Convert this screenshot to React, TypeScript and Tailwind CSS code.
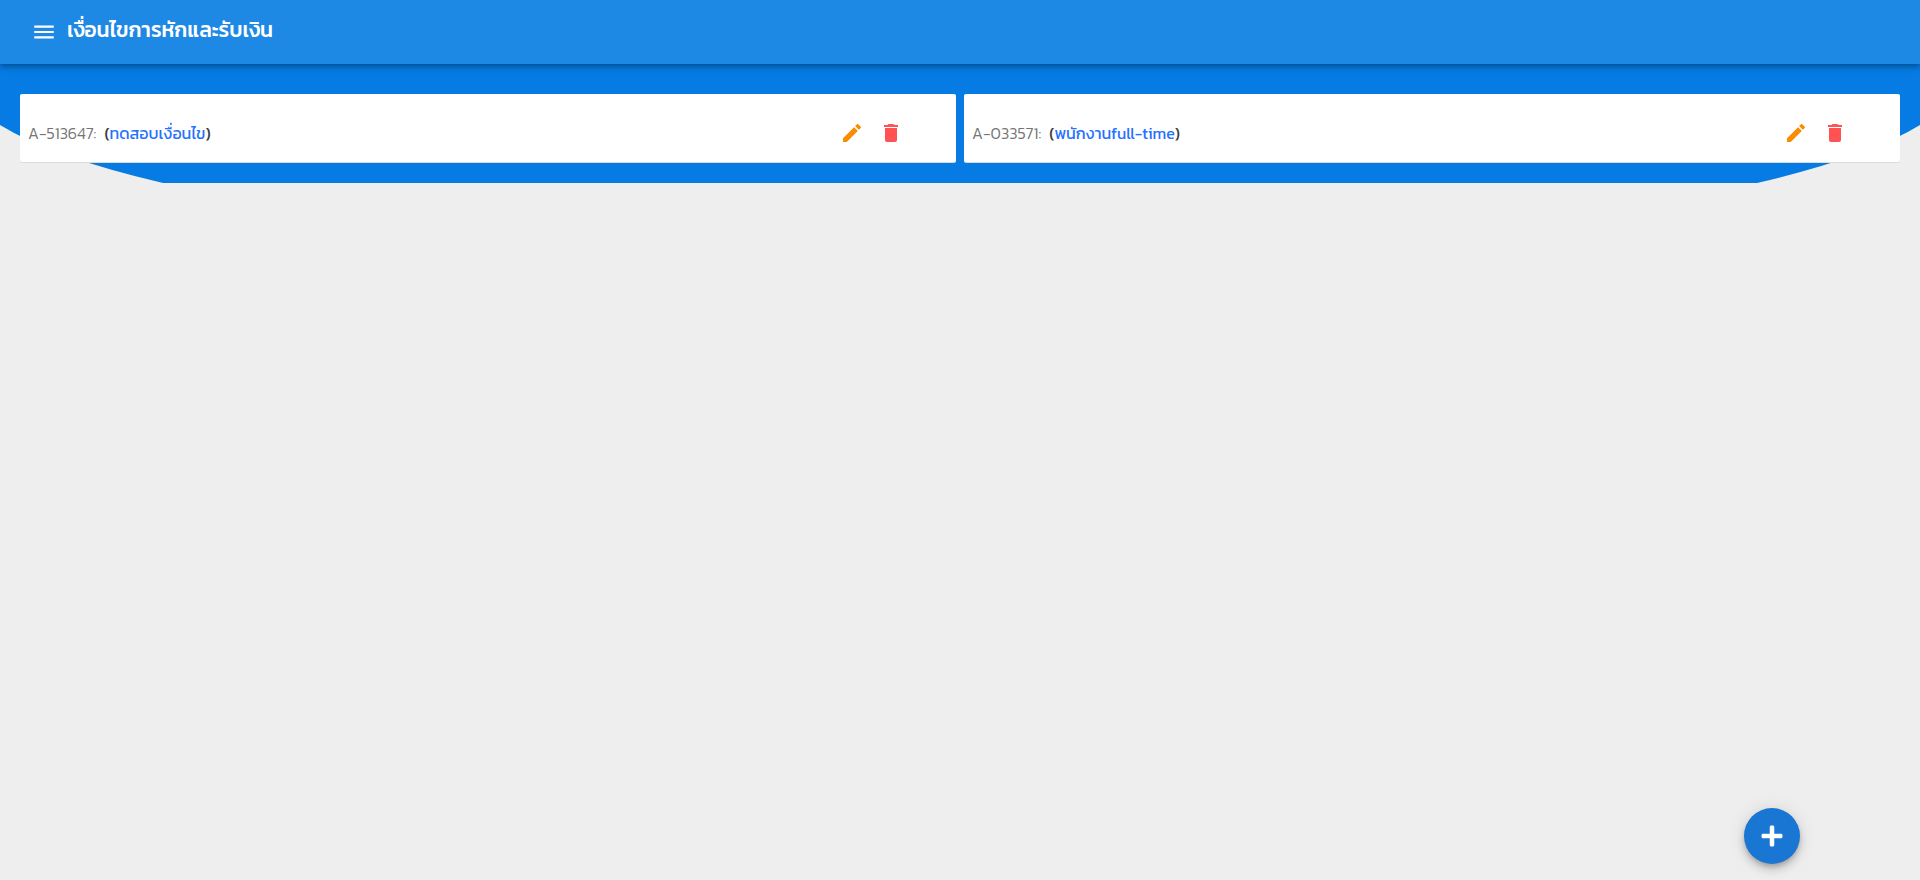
import { FaPlus } from "react-icons/fa";
import { MdDelete, MdEdit, MdMenu } from "react-icons/md";

interface Condition {
  code: string;
  name: string;
}

const conditions: Condition[] = [
  { code: "A-513647", name: "ทดสอบเงื่อนไข" },
  { code: "A-033571", name: "พนักงานfull-time" },
];

function Backdrop() {
  return (
    <svg
      className="absolute inset-x-0 top-0 h-[183px] w-full"
      viewBox="0 0 1920 183"
      preserveAspectRatio="none"
      aria-hidden="true"
    >
      <path
        d="M0 0H1920V125Q1868 157 1757 183H163Q52 157 0 125Z"
        fill="#067be3"
      />
    </svg>
  );
}

function ConditionCard({ code, name }: Condition) {
  return (
    <article className="flex h-[68px] items-center rounded-xs bg-white pr-[53px] pl-2 shadow-[0_1px_0_#dcdcdc]">
      <p className="mt-2.5 flex-1 text-base leading-6 whitespace-nowrap text-[#3c3c3c]">
        <span className="mr-2 font-light text-[#757575]">{code}:</span>
        (
        <a href="#" className="text-[#2470ff]">
          {name}
        </a>
        )
      </p>
      <div className="mt-2.5 flex gap-[15px]">
        <button type="button" aria-label="แก้ไข" className="text-[#fb8c00]">
          <MdEdit size={24} />
        </button>
        <button type="button" aria-label="ลบ" className="text-[#ff5252]">
          <MdDelete size={24} />
        </button>
      </div>
    </article>
  );
}

export default function App() {
  return (
    <div className="relative min-h-screen bg-[#eeeeee] font-['Kanit','Prompt','Noto_Sans_Thai','Noto_Sans',sans-serif]">
      <Backdrop />
      <header className="relative flex h-16 items-center gap-2.5 bg-[#1e88e5] px-[31px] text-white shadow-[0_2px_4px_-1px_rgba(0,0,0,0.2),0_4px_5px_0_rgba(0,0,0,0.14),0_1px_10px_0_rgba(0,0,0,0.12)]">
        <button type="button" aria-label="เมนู">
          <MdMenu size={26} />
        </button>
        <h1 className="pb-1 text-[21px] leading-7 font-medium">เงื่อนไขการหักและรับเงิน</h1>
      </header>
      <main className="relative grid grid-cols-2 gap-2 px-5 pt-[30px]">
        {conditions.map((condition) => (
          <ConditionCard key={condition.code} {...condition} />
        ))}
      </main>
      <button
        type="button"
        aria-label="เพิ่ม"
        className="fixed right-[120px] bottom-4 flex size-14 items-center justify-center rounded-full bg-[#1976d2] text-white shadow-[0_3px_5px_-1px_rgba(0,0,0,0.2),0_6px_10px_0_rgba(0,0,0,0.14),0_1px_18px_0_rgba(0,0,0,0.12)]"
      >
        <FaPlus size={24} />
      </button>
    </div>
  );
}
